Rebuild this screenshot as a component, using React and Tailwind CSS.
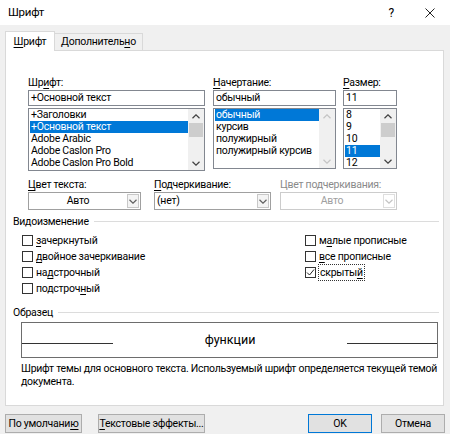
import React from 'react';

const U = ({ children }) => <span className="underline decoration-1 underline-offset-[2px]">{children}</span>;

function Chevron({ dir = 'down', color = '#333' }) {
  return (
    <svg width="8" height="5" viewBox="0 0 8 5" className="block">
      {dir === 'down'
        ? <path d="M0.5 0.8 L4 4.2 L7.5 0.8" fill="none" stroke={color} strokeWidth="1.2" />
        : <path d="M0.5 4.2 L4 0.8 L7.5 4.2" fill="none" stroke={color} strokeWidth="1.2" />}
    </svg>
  );
}

function ScrollBar({ disabled = false }) {
  const c = disabled ? '#c4c4c4' : '#404040';
  return (
    <div className="w-[16px] h-full bg-[#f0f0f0] flex flex-col">
      <div className="h-[14px] flex items-center justify-center"><Chevron dir="up" color={c} /></div>
      <div className="flex-1 px-[1px]">
        {!disabled && <div className="h-[14px] bg-[#cdcdcd]" />}
      </div>
      <div className="h-[14px] flex items-center justify-center"><Chevron dir="down" color={c} /></div>
    </div>
  );
}

function ListBox({ items, selected, height, disabledBar }) {
  return (
    <div className={`flex border border-[#828790] bg-white ${height}`}>
      <div className="flex-1 pl-[1px] overflow-hidden">
        {items.map((it, i) => (
          <div
            key={i}
            className={`h-[12px] leading-[12px] pl-[1px] whitespace-nowrap ${i === selected ? 'bg-[#0078d7] text-white' : ''}`}
          >
            {it}
          </div>
        ))}
      </div>
      <ScrollBar disabled={disabledBar} />
    </div>
  );
}

function Combo({ value, center, disabled, width }) {
  return (
    <div className={`flex h-[18px] border ${disabled ? 'border-[#cccccc]' : 'border-[#a0a0a0]'} bg-white ${width}`}>
      <div className={`flex-1 leading-[16px] whitespace-nowrap ${center ? 'text-center' : 'pl-[2px]'} ${disabled ? 'text-[#a0a0a0]' : ''}`}>{value}</div>
      <div className={`w-[12px] my-[1px] mr-[1px] flex items-center justify-center border ${disabled ? 'border-[#dedede]' : 'border-[#c8c8c8] bg-[#f4f4f4]'}`}>
        <Chevron color={disabled ? '#c4c4c4' : '#606060'} />
      </div>
    </div>
  );
}

function Check({ label, checked, focus }) {
  return (
    <div className="h-[16px] flex items-center whitespace-nowrap">
      <div className="w-[11px] h-[11px] border border-[#333] bg-white flex items-center justify-center">
        {checked && (
          <svg width="9" height="9" viewBox="0 0 9 9" className="block">
            <path d="M1 4.5 L3.5 7 L8 1.5" fill="none" stroke="#222" strokeWidth="1" />
          </svg>
        )}
      </div>
      <div className={`ml-[3px] leading-[15px] ${focus ? 'outline-1 outline-dotted outline-[#333] px-[1px]' : ''}`}>{label}</div>
    </div>
  );
}

function Group({ title }) {
  return (
    <div className="flex items-center h-[15px] pl-[7px] pr-[4px]">
      <span className="leading-[15px] whitespace-nowrap">{title}</span>
      <div className="flex-1 h-px bg-[#dcdcdc] ml-[5px]" />
    </div>
  );
}

export default function App() {
  return (
    <div className="w-[450px] h-[434px] bg-[#f0f0f0] flex flex-col font-['Roboto',sans-serif] text-[10.5px] tracking-[-0.25px] text-black overflow-hidden">
      {/* Title bar */}
      <div className="h-[25px] bg-white flex items-center pl-[8px] shrink-0">
        <span className="text-[11.5px]">Шрифт</span>
        <span className="ml-auto mr-[31px] text-[12px]">?</span>
        <svg width="10" height="10" viewBox="0 0 10 10" className="mr-[15px]">
          <path d="M0.5 0.5 L9.5 9.5 M9.5 0.5 L0.5 9.5" stroke="#222" strokeWidth="1" />
        </svg>
      </div>

      {/* Tabs */}
      <div className="flex items-end mt-[6px] px-[5px] h-[19px] shrink-0">
        <div className="relative z-10 -mb-px h-[20px] w-[50px] bg-white border border-b-0 border-[#d9d9d9] flex items-center justify-center whitespace-nowrap">
          <span><U>Ш</U>рифт</span>
        </div>
        <div className="h-[17px] w-[88px] border border-l-0 border-b-0 border-[#d9d9d9] flex items-center justify-center whitespace-nowrap">
          <span>Дополнитель<U>н</U>о</span>
        </div>
      </div>

      {/* Panel */}
      <div className="mx-[5px] w-[439px] h-[356px] bg-white border border-[#d9d9d9] shrink-0 flex flex-col">
        {/* Row 1 */}
        <div className="flex mt-[24px] pl-[22px]">
          <div className="w-[177px] flex flex-col">
            <div className="h-[15px] leading-[15px]">Шр<U>и</U>фт:</div>
            <div className="h-[16px] border border-[#828790] leading-[14px] pl-[2px] whitespace-nowrap">+Основной текст</div>
            <div className="mt-[2px]">
              <ListBox
                height="h-[63px]"
                selected={1}
                items={['+Заголовки', '+Основной текст', 'Adobe Arabic', 'Adobe Caslon Pro', 'Adobe Caslon Pro Bold']}
              />
            </div>
          </div>
          <div className="w-[123px] ml-[8px] flex flex-col">
            <div className="h-[15px] leading-[15px]"><U>Н</U>ачертание:</div>
            <div className="h-[16px] border border-[#828790] leading-[14px] pl-[2px]">обычный</div>
            <div className="mt-[2px]">
              <ListBox
                height="h-[61px]"
                selected={0}
                disabledBar
                items={['обычный', 'курсив', 'полужирный', 'полужирный курсив']}
              />
            </div>
          </div>
          <div className="w-[54px] ml-[7px] flex flex-col">
            <div className="h-[15px] leading-[15px]"><U>Р</U>азмер:</div>
            <div className="h-[16px] border border-[#828790] leading-[14px] pl-[2px]">11</div>
            <div className="mt-[2px]">
              <ListBox height="h-[61px]" selected={3} items={['8', '9', '10', '11', '12']} />
            </div>
          </div>
        </div>

        {/* Row 2 */}
        <div className="flex mt-[6px] pl-[22px]">
          <div className="flex flex-col">
            <div className="h-[15px] leading-[15px]"><U>Ц</U>вет текста:</div>
            <Combo value="Авто" center width="w-[113px]" />
          </div>
          <div className="flex flex-col ml-[13px]">
            <div className="h-[15px] leading-[15px]"><U>П</U>одчеркивание:</div>
            <Combo value="(нет)" width="w-[117px]" />
          </div>
          <div className="flex flex-col ml-[9px]">
            <div className="h-[15px] leading-[15px] text-[#8a8a8a] whitespace-nowrap">Цвет подчеркивания:</div>
            <Combo value="Авто" center disabled width="w-[117px]" />
          </div>
        </div>

        {/* Effects */}
        <div className="mt-[4px]">
          <Group title="Видоизменение" />
        </div>
        <div className="flex mt-[3px] pl-[16px]">
          <div className="w-[283px] flex flex-col">
            <Check label={<><U>з</U>ачеркнутый</>} />
            <Check label={<><U>д</U>войное зачеркивание</>} />
            <Check label={<>на<U>д</U>строчный</>} />
            <Check label={<>подстроч<U>н</U>ый</>} />
          </div>
          <div className="flex flex-col">
            <Check label={<>м<U>а</U>лые прописные</>} />
            <Check label={<><U>в</U>се прописные</>} />
            <Check label={<>скрыты<U>й</U></>} checked focus />
          </div>
        </div>

        {/* Sample */}
        <div className="mt-[9px]">
          <Group title="Образец" />
        </div>
        <div className="ml-[15px] mt-[2px] w-[417px] h-[36px] border border-[#6d6d6d] flex items-end pb-[13px]">
          <div className="w-[91px] h-px bg-[#333]" />
          <div className="flex-1 text-center text-[12.5px] tracking-normal leading-[17px] -mb-[4px]">функции</div>
          <div className="w-[90px] h-px bg-[#333]" />
        </div>
        <div className="ml-[15px] mt-[4px] leading-[13px] whitespace-nowrap">
          Шрифт темы для основного текста. Используемый шрифт определяется текущей темой<br />документа.
        </div>
      </div>

      {/* Buttons */}
      <div className="flex mt-[8px] px-[5px] h-[19px] shrink-0 whitespace-nowrap">
        <button className="w-[77px] h-full bg-[#e1e1e1] border border-[#adadad] leading-[17px]">По умолчани<U>ю</U></button>
        <button className="ml-[16px] w-[107px] h-full bg-[#e1e1e1] border border-[#adadad] leading-[17px]"><U>Т</U>екстовые эффекты...</button>
        <button className="ml-auto w-[64px] h-full bg-[#e1e1e1] border border-[#0078d7] leading-[17px]">OK</button>
        <button className="ml-[9px] w-[64px] h-full bg-[#e1e1e1] border border-[#adadad] leading-[17px]">Отмена</button>
      </div>
    </div>
  );
}
